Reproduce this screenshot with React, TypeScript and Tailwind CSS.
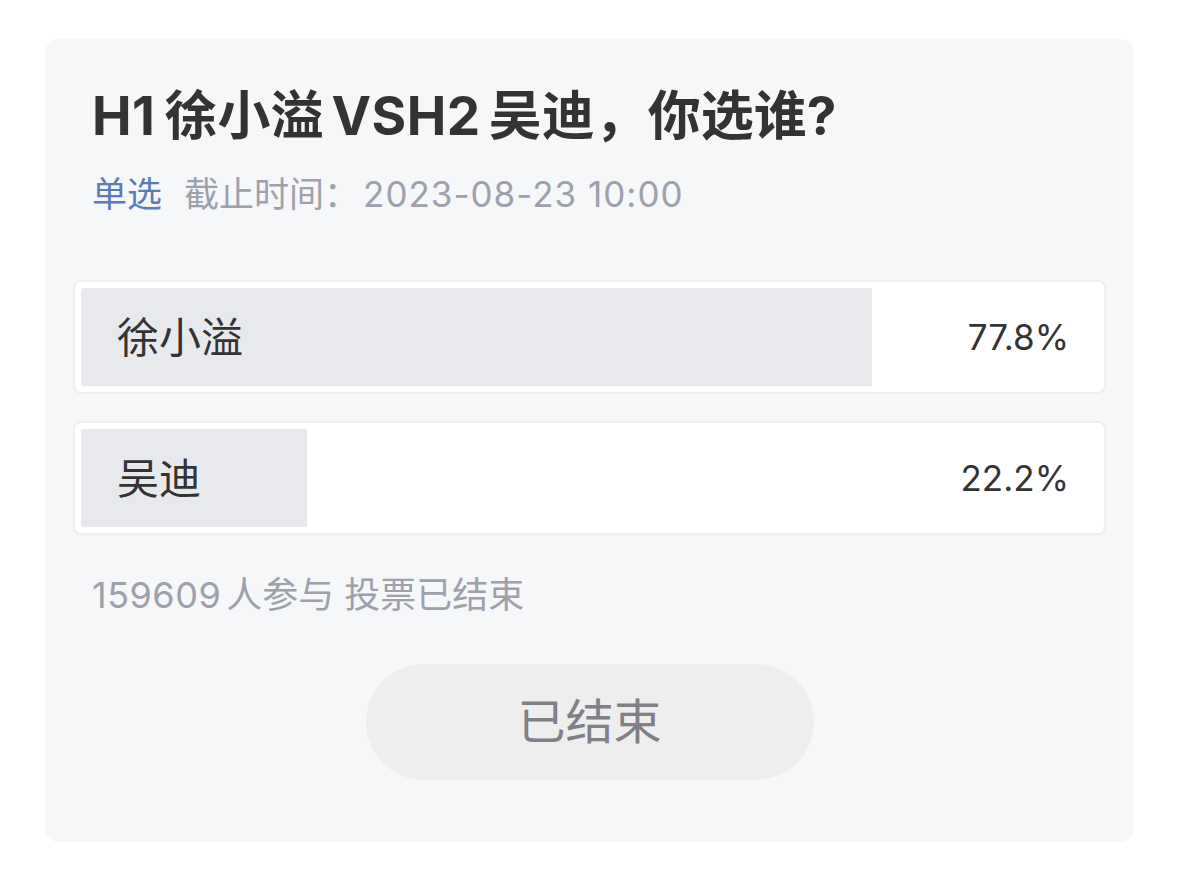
const options = [
  { name: "徐小溢", pct: 77.8 },
  { name: "吴迪", pct: 22.2 },
];

const PollOption = ({ name, pct }: { name: string; pct: number }) => {
  return (
    <div className="rounded-[8px] border-2 border-[#eeeff1] bg-white p-[6px]">
      <div className="relative flex h-[98px] items-center justify-between">
        <div className="absolute inset-y-0 left-0 rounded-l-[3px] bg-[#e8e9ed]" style={{ width: `${pct}%` }}></div>
        <span className="relative pl-[36px] text-[42px] text-[#333]">{name}</span>
        <span className="relative pr-[29px] text-[35px] text-[#333]">{pct}%</span>
      </div>
    </div>
  );
};

export default function App() {
  return (
    <div className="min-h-[892px] bg-white px-[45px] pt-[39px] font-['Inter','Noto_Sans_CJK_SC',sans-serif]">
      <div className="flex h-[803px] flex-col rounded-[14px] bg-[#f6f7f9] px-[28px]">
        <div className="px-[19px] pt-[47px]">
          <h1 className="text-[53px] leading-[60px] font-bold text-[#333]">
            <span className="mr-[9px] tracking-[0.5px]">H1</span>徐小溢
            <span className="mx-[8px] tracking-[0.5px]">VSH2</span>吴迪，你选谁?
          </h1>
          <div className="mt-[24px] flex items-center gap-[22px] text-[35px] leading-[48px]">
            <span className="text-[#5b7bb8]">单选</span>
            <span className="text-[#9ea1ac]">
              截止时间：<span className="ml-[4px] tracking-[1px]">2023-08-23 10:00</span>
            </span>
          </div>
        </div>
        <div className="mt-[62px] flex flex-col gap-[27px]">
          {options.map((o) => (
            <PollOption key={o.name} name={o.name} pct={o.pct} />
          ))}
        </div>
        <p className="mt-[36px] px-[19px] text-[36px] leading-[48px] text-[#9ea1ac]">
          <span className="mr-[5px] tracking-[0.5px]">159609</span>人参与 投票已结束
        </p>
        <div className="mt-[45px] flex justify-center">
          <div className="flex h-[116px] w-[448px] items-center justify-center rounded-full bg-[#eeeeee] text-[48px] text-[#808187]">
            已结束
          </div>
        </div>
      </div>
    </div>
  );
}
